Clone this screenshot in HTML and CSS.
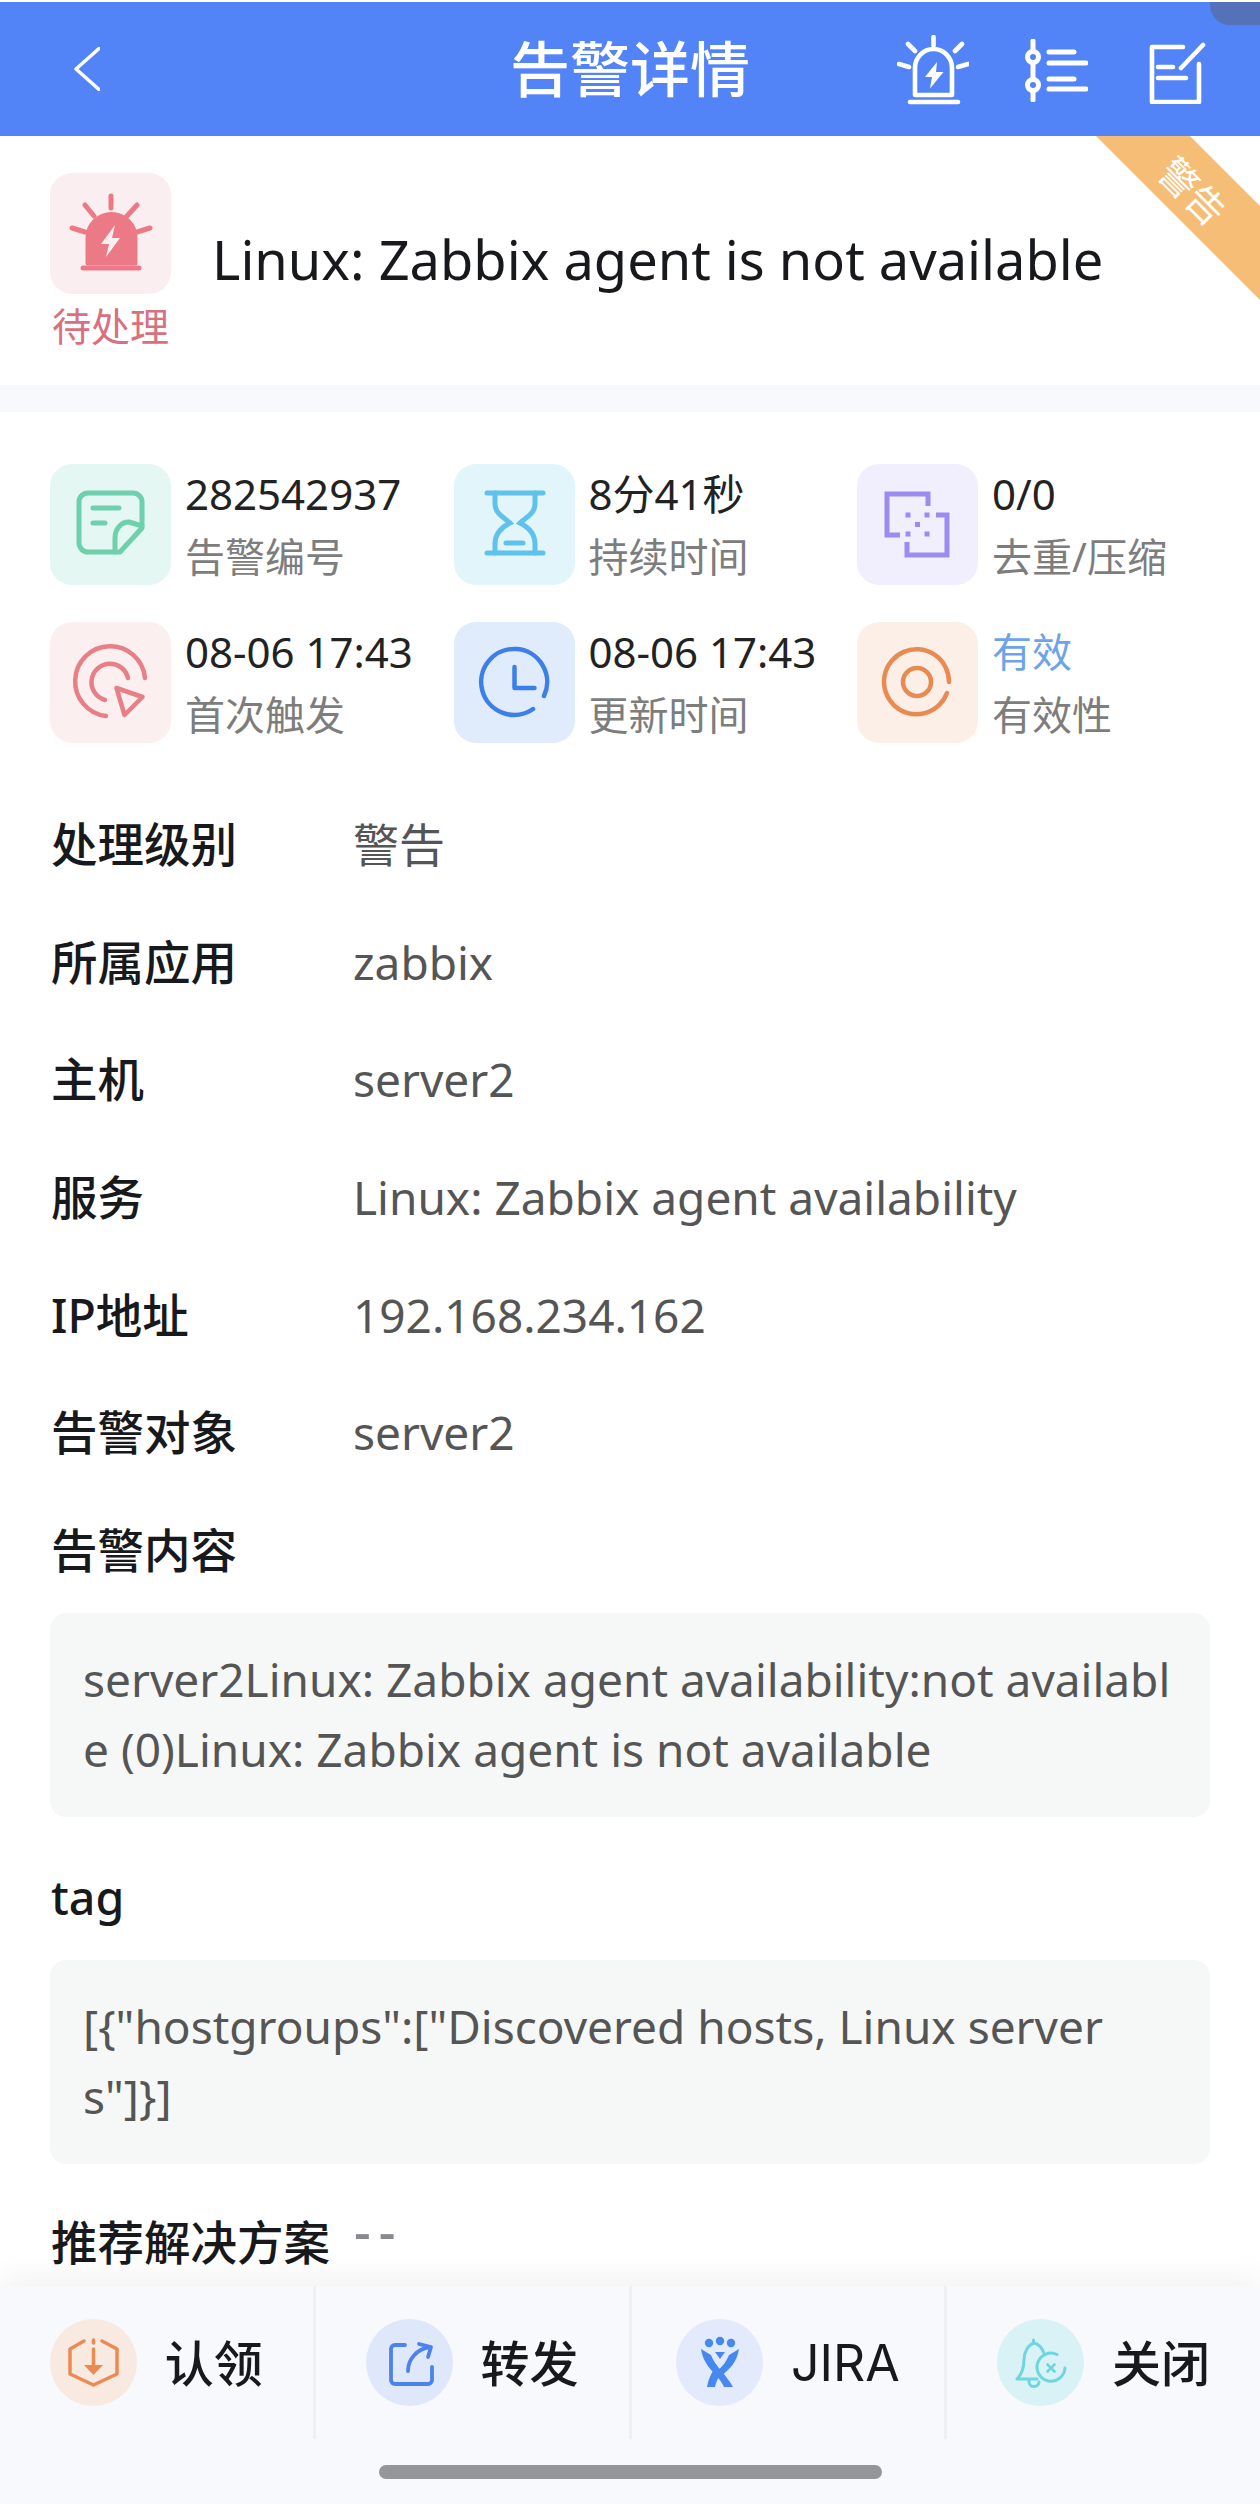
FILE: index.html
```html
<!DOCTYPE html>
<html lang="zh">
<head>
<meta charset="utf-8">
<title>告警详情</title>
<link rel="stylesheet" href="styles.css">
</head>
<body>
<div class="page">
	<div class="notch"></div>
	<header class="topbar">
		<svg class="back" width="26" height="44" viewBox="0 0 26 44"><path d="M25 1.5 2 22l23 20.5" fill="none" stroke="#fff" stroke-width="3.4" stroke-linecap="round" stroke-linejoin="round"/></svg>
		<h1 class="topbar-title">告警详情</h1>
		<svg class="tool tool-alarm" width="72" height="70" viewBox="0 0 72 70" fill="none" stroke="#fff" stroke-width="4.6" stroke-linecap="round" stroke-linejoin="round">
			<path d="M36.5 2v9M11 9l7 7M65 9l-7 7M2 29l10 3M71 29l-10 3M13 67h48"/>
			<path d="M18 60V33a18.500 19 0 0 1 37 0v27z"/>
			<path d="M40 27 28 42h7l-2 11.500L46.500 37H39z" fill="#fff" stroke="none"/>
		</svg>
		<svg class="tool tool-list" width="63" height="63" viewBox="0 0 63 63" fill="none" stroke="#fff" stroke-width="5" stroke-linecap="round">
			<path d="M8 2v59M24 13h25M24 24h37M24 40h25M24 50h37"/>
			<circle cx="8" cy="18" r="5.500" fill="#5284f7"/>
			<circle cx="8" cy="46" r="5.500" fill="#5284f7"/>
		</svg>
		<svg class="tool tool-edit" width="57" height="62" viewBox="0 0 57 62" fill="none" stroke="#fff" stroke-width="4.600" stroke-linecap="round" stroke-linejoin="round">
			<path d="M34 5H3v55h47V22M54 3 32 26M9 25h15M9 36h28"/>
		</svg>
	</header>

	<div class="ribbon"><span class="ribbon-text">警告</span></div>

	<section class="hero">
		<div class="hero-state">
			<div class="tile tile-pink">
				<svg width="121" height="121" viewBox="0 0 121 121" fill="none" stroke="#ec7a86" stroke-width="5" stroke-linecap="round">
					<path d="M61 23v12M35 32l9 11M87 32l-10 11M22 55l13 4M100 55l-13 4M33 95h56" />
					<path d="M38 90V65a23.500 23.500 0 0 1 47 0v25z" fill="#ec7a86" stroke-linejoin="round"/>
					<path d="M65 52 51 71h8l-3 13 14-19h-8z" fill="#fbeef0" stroke="none"/>
				</svg>
			</div>
			<div class="hero-label">待处理</div>
		</div>
		<div class="hero-title">Linux: Zabbix agent is not available</div>
	</section>
	<div class="strip"></div>

	<main class="content">
		<div class="stats">
			<div class="stat">
				<div class="tile tile-green">
					<svg width="121" height="121" viewBox="0 0 121 121" fill="none" stroke="#6fd0ad" stroke-width="5" stroke-linecap="round" stroke-linejoin="round">
						<path d="M92 64V38a9 9 0 0 0-9-9H38a9 9 0 0 0-9 9v41a9 9 0 0 0 9 9h32z"/>
						<path d="M65 88V74c0-9 6-16 14-16l13 4"/>
						<path d="M43 44h26M43 59h12"/>
					</svg>
				</div>
				<div class="stat-text"><div class="stat-value">282542937</div><div class="stat-name">告警编号</div></div>
			</div>
			<div class="stat">
				<div class="tile tile-sky">
					<svg width="121" height="121" viewBox="0 0 121 121" fill="none" stroke="#5fc2ea" stroke-width="5" stroke-linecap="round">
						<path d="M33 29h56M33 89h56M52 79h17"/>
						<path d="M41 29v11c0 10 11 15 15 19-8 4-15 11-15 21v9M81 29v11c0 10-11 15-15 19 8 4 15 11 15 21v9"/>
					</svg>
				</div>
				<div class="stat-text"><div class="stat-value">8分41秒</div><div class="stat-name">持续时间</div></div>
			</div>
			<div class="stat">
				<div class="tile tile-violet">
					<svg width="121" height="121" viewBox="0 0 121 121" fill="none" stroke="#9b8cf0" stroke-width="5">
						<path d="M71 42V30H30v41h13M79 51h11v40H50V78"/>
						<path d="M48.500 51h5M67.500 51h5M58 60.500h5M48.500 70h5M67.500 70h5" stroke-width="5"/>
					</svg>
				</div>
				<div class="stat-text"><div class="stat-value">0/0</div><div class="stat-name">去重/压缩</div></div>
			</div>
			<div class="stat">
				<div class="tile tile-rose">
					<svg width="121" height="121" viewBox="0 0 121 121" fill="none" stroke="#e97f86" stroke-width="4.500" stroke-linecap="round" stroke-linejoin="round">
						<path d="M95 56a35 35 0 1 0-39 38"/>
						<path d="M78 56a18.500 18.500 0 1 0-23 22"/>
						<path d="m66.500 66 26 9-18 18z"/>
					</svg>
				</div>
				<div class="stat-text"><div class="stat-value">08-06 17:43</div><div class="stat-name">首次触发</div></div>
			</div>
			<div class="stat">
				<div class="tile tile-blue">
					<svg width="121" height="121" viewBox="0 0 121 121" fill="none" stroke="#3d7fe8" stroke-width="4.500" stroke-linecap="round" stroke-linejoin="round">
						<path d="M79 87a33 33 0 1 1 11-13"/>
						<path d="M60.500 45v21h20"/>
					</svg>
				</div>
				<div class="stat-text"><div class="stat-value">08-06 17:43</div><div class="stat-name">更新时间</div></div>
			</div>
			<div class="stat">
				<div class="tile tile-orange">
					<svg width="121" height="121" viewBox="0 0 121 121" fill="none" stroke="#e88a52" stroke-width="4.500" stroke-linecap="round">
						<path d="M92 60a32.500 32.500 0 1 0-2 11"/>
						<circle cx="60" cy="60" r="14"/>
					</svg>
				</div>
				<div class="stat-text"><div class="stat-value stat-value-link">有效</div><div class="stat-name">有效性</div></div>
			</div>
		</div>

		<div class="rows">
			<div class="row"><span class="row-key">处理级别</span><span class="row-val">警告</span></div>
			<div class="row"><span class="row-key">所属应用</span><span class="row-val">zabbix</span></div>
			<div class="row"><span class="row-key">主机</span><span class="row-val">server2</span></div>
			<div class="row"><span class="row-key">服务</span><span class="row-val">Linux: Zabbix agent availability</span></div>
			<div class="row"><span class="row-key">IP地址</span><span class="row-val">192.168.234.162</span></div>
			<div class="row"><span class="row-key">告警对象</span><span class="row-val">server2</span></div>
		</div>

		<div class="block-title">告警内容</div>
		<div class="block">server2Linux: Zabbix agent availability:not available (0)Linux: Zabbix agent is not available</div>
		<div class="block-title block-title-tag">tag</div>
		<div class="block">[{"hostgroups":["Discovered hosts, Linux servers"]}]</div>
		<div class="solution"><span class="solution-key">推荐解决方案</span><span class="solution-val">--</span></div>
	</main>

	<footer class="actions">
		<div class="action-row">
			<div class="action">
				<span class="circle circle-orange">
					<svg width="87" height="87" viewBox="0 0 87 87" fill="none" stroke="#ec8a55" stroke-width="3.500" stroke-linecap="round" stroke-linejoin="round">
						<path d="M34 22 20 30v25l23.500 11L67 55V30l-15-8M43.500 21v3M43.500 30v18"/>
						<path d="M34 46h19l-9.500 10z" fill="#ec8a55" stroke="none"/>
					</svg>
				</span>
				<span class="action-text">认领</span>
			</div>
			<div class="action">
				<span class="circle circle-blue">
					<svg width="87" height="87" viewBox="0 0 87 87" fill="none" stroke="#4d82ec" stroke-width="3.800" stroke-linecap="round" stroke-linejoin="round">
						<path d="M39 26H29a4 4 0 0 0-4 4v31a4 4 0 0 0 4 4h33a4 4 0 0 0 4-4V48"/>
						<path d="M42 52c0-12 9-22 22-24M53 25l12 3-3 10"/>
					</svg>
				</span>
				<span class="action-text">转发</span>
			</div>
			<div class="action">
				<span class="circle circle-jira">
					<svg width="87" height="87" viewBox="0 0 87 87" fill="#4788f0">
						<circle cx="33" cy="24" r="4.200"/><circle cx="44" cy="22" r="4.200"/><circle cx="55" cy="24" r="4.200"/>
						<path d="M39 33h10l-5 7z"/>
						<path d="M25 30l10 6c4 11 14 18 22 32h-9c-5-13-20-18-23-38z"/>
						<path d="M63 30l-10 6c-3 7-6 11-11 15l4 5c8-6 15-13 17-26zM38 50c-3 5-6 11-7 18h8c1-5 3-9 5-12z"/>
					</svg>
				</span>
				<span class="action-text action-text-latin">JIRA</span>
			</div>
			<div class="action">
				<span class="circle circle-cyan">
					<svg width="87" height="87" viewBox="0 0 87 87" fill="none" stroke="#6fd5df" stroke-width="3" stroke-linecap="round" stroke-linejoin="round">
						<path d="M20 60c5-5 7-11 7-19 0-8 4-15 10-17 5 1 8 5 10 10M20 60h20M36.500 24v-3"/>
						<path d="M32 62a5 5 0 0 0 10 1"/>
						<path d="M60 35.500A14 14 0 1 0 68 49"/>
						<path d="m50.500 45.500 7 7M57.500 45.500l-7 7" stroke-width="2.600"/>
					</svg>
				</span>
				<span class="action-text">关闭</span>
			</div>
		</div>
		<div class="home-area"><div class="home-bar"></div></div>
	</footer>
</div>
</body>
</html>
```

FILE: styles.css
```css
* { box-sizing: border-box; }

html, body { margin: 0; padding: 0; }

body {
	background: #fff;
	font-family: "Noto Sans", "Noto Sans CJK SC", sans-serif;
	color: #17191c;
}

.page {
	position: relative;
	display: flex;
	flex-direction: column;
	width: 1260px;
	height: 2504px;
	overflow: hidden;
}

/* top */
.topbar {
	position: relative;
	flex: none;
	height: 134px;
	margin-top: 2px;
	background: #5284f7;
}

.topbar-title {
	margin: 0;
	padding-top: 32px;
	font-size: 60px;
	font-weight: 500;
	line-height: 70px;
	text-align: center;
	color: #fff;
}

.back, .tool { position: absolute; }
.back { left: 74px; top: 45px; }
.tool-alarm { left: 897px; top: 33px; }
.tool-list { left: 1025px; top: 37px; }
.tool-edit { left: 1149px; top: 40px; }

.notch {
	position: absolute;
	z-index: 2;
	top: 2px;
	right: 0;
	width: 50px;
	height: 23px;
	background: #5571b8;
	border-bottom-left-radius: 20px;
}

.ribbon {
	position: absolute;
	z-index: 2;
	top: 136px;
	right: 0;
	width: 164px;
	height: 164px;
	background: #f5bd75;
	clip-path: polygon(0 0, 94px 0, 164px 70px, 164px 164px);
}

.ribbon-text {
	position: absolute;
	left: 52px;
	top: 32px;
	width: 90px;
	font-size: 38px;
	line-height: 46px;
	text-align: center;
	color: #fff;
	transform: rotate(45deg);
}

/* hero */
.hero {
	flex: none;
	display: flex;
	height: 249px;
	padding: 37px 0 0 50px;
	background: #fff;
}

.hero-state { width: 121px; }

.hero-label {
	margin-top: 6px;
	font-size: 39px;
	line-height: 52px;
	white-space: nowrap;
	text-align: center;
	color: #d9707f;
}

.hero-title {
	margin: 49px 0 0 41px;
	font-size: 54.200px;
	line-height: 74px;
	white-space: nowrap;
}

.strip {
	flex: none;
	height: 27px;
	background: #f7f9fd;
}

/* tiles */
.tile {
	flex: none;
	width: 121px;
	height: 121px;
	border-radius: 22px;
}

.tile svg { display: block; }

.tile-pink { background: #fbeef0; }
.tile-green { background: #e4f7f2; }
.tile-sky { background: #e1f5fb; }
.tile-violet { background: #f1effd; }
.tile-rose { background: #fbefef; }
.tile-blue { background: #e0ebfb; }
.tile-orange { background: #fcefe7; }

/* stats */
.content {
	flex: 1;
	min-height: 0;
	overflow: hidden;
	padding: 52px 50px 0;
}

.stats {
	display: grid;
	grid-template-columns: repeat(3, 403.500px);
	grid-auto-rows: 121px;
	row-gap: 37px;
}

.stat {
	display: flex;
	gap: 14px;
}

.stat-text { white-space: nowrap; }

.stat-value {
	height: 62px;
	font-size: 42px;
	line-height: 60px;
	color: #222;
}

.stat-value-link { color: #6ea3e8; font-size: 40px; }

.stat-name {
	height: 59px;
	font-size: 40px;
	line-height: 62px;
	color: #7d7d7d;
}

/* rows */
.rows { margin-top: 66px; }

.row {
	display: flex;
	height: 117.670px;
	font-size: 46.500px;
	line-height: 70px;
}

.row-key { width: 302px; margin-left: 1px; font-weight: 500; }
.row-val { font-size: 46px; color: #555; }

.block-title {
	height: 98px;
	margin-left: 1px;
	font-size: 46.500px;
	font-weight: 500;
	line-height: 70px;
}

.block-title-tag { margin-top: 45px; height: 98px; }

.block {
	height: 204px;
	padding: 31px 33px;
	background: #f6f8f8;
	border-radius: 16px;
	font-size: 46px;
	line-height: 70px;
	color: #555;
	word-break: break-all;
}

.solution {
	display: flex;
	margin-top: 43px;
	margin-left: 1px;
	font-size: 46.500px;
	font-weight: 500;
	line-height: 70px;
}

.solution-val {
	margin-left: 24px;
	margin-top: -11px;
	font-size: 52px;
	font-weight: 500;
	letter-spacing: 8px;
	color: #8a8a8e;
}

/* bottom */
.actions {
	position: relative;
	flex: none;
	height: 218px;
	background: #f7f9fd;
	box-shadow: 0 -10px 28px rgba(0, 0, 0, 0.05);
}

.action-row {
	display: flex;
	height: 153px;
}

.action {
	flex: 1;
	display: flex;
	align-items: center;
	justify-content: center;
	gap: 28px;
	border-left: 3px solid #eef0f3;
}

.action:first-child { border-left: 0; }

.circle {
	flex: none;
	width: 87px;
	height: 87px;
	border-radius: 50%;
}

.circle svg { display: block; }

.circle-orange { background: #f8e9e1; }
.circle-blue { background: #dfe8fa; }
.circle-jira { background: #e2eafb; }
.circle-cyan { background: #d8f2f5; }

.action-text {
	font-size: 49px;
	font-weight: 500;
	line-height: 60px;
	color: #17191c;
}

.action-text-latin {
	font-family: Inter, "Noto Sans", sans-serif;
	font-size: 50px;
	font-weight: 400;
}

.home-area {
	display: flex;
	justify-content: center;
	padding-top: 26px;
}

.home-bar {
	width: 503px;
	height: 14px;
	background: #959698;
	border-radius: 7px;
}
```
